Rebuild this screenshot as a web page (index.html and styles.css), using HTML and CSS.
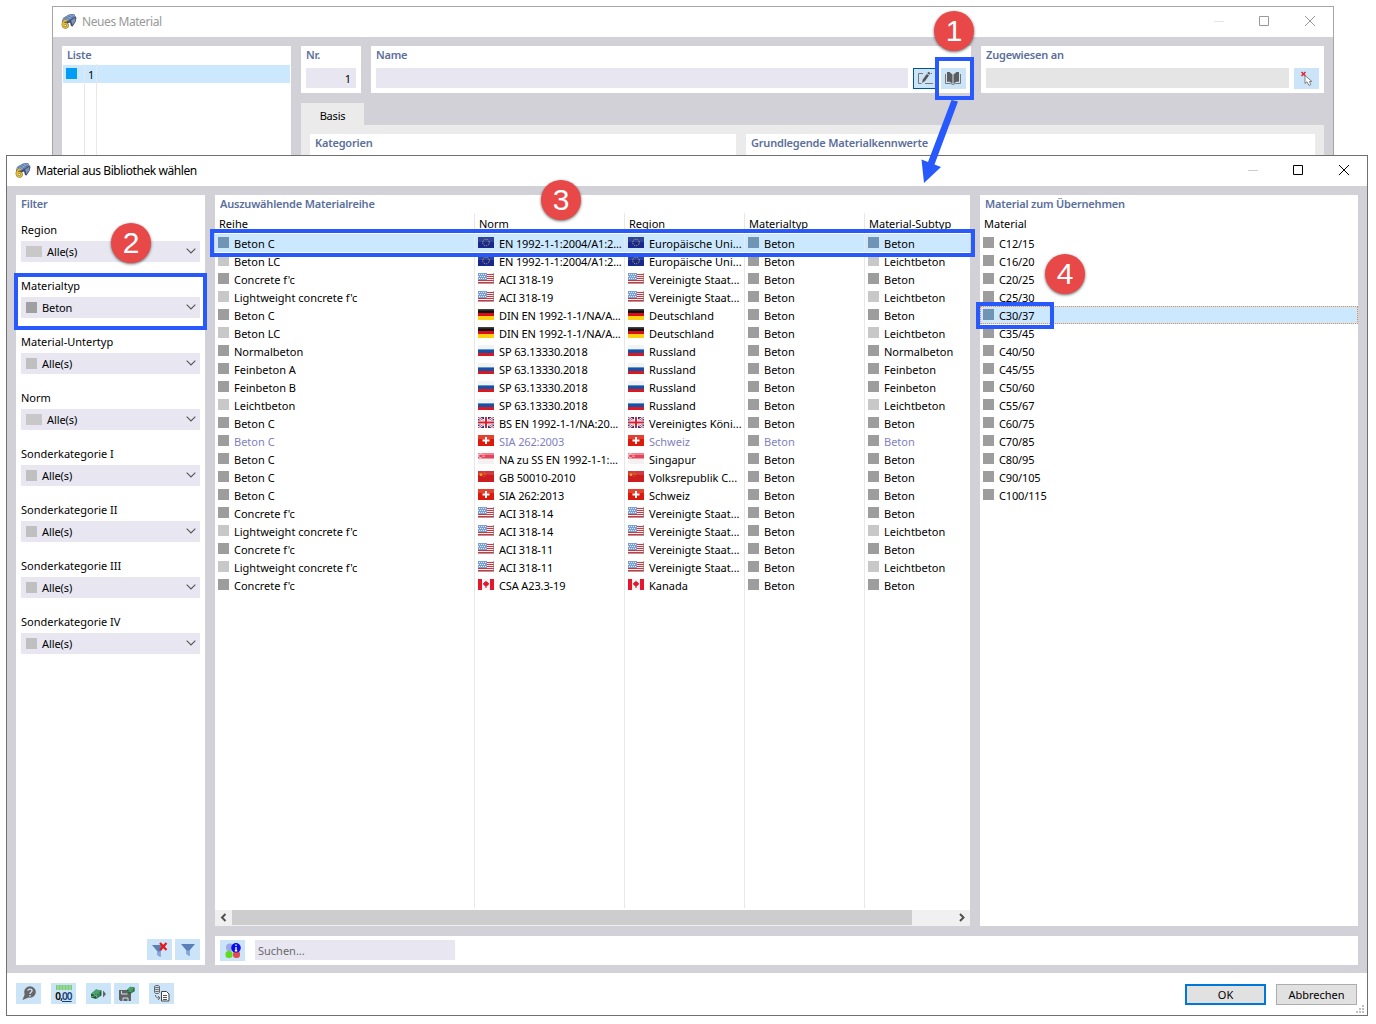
FILE: index.html
```html
<!DOCTYPE html>
<html lang="de">
<head>
    <meta charset="UTF-8">
    <meta name="viewport" content="width=device-width, initial-scale=1.0">
    <title>Material aus Bibliothek wählen</title>
    <link rel="stylesheet" href="styles.css">
</head>
<body>
    <!-- Shared icons and flags -->
    <svg class="defs" aria-hidden="true">
        <symbol id="app" viewBox="0 0 16 16">
            <path d="M2 5 8 1.5 13 1 15.500 5 14.500 9 11.500 13.500 10 13 9 9.500 5 11 1 9z" fill="#3c4f74"/>
            <path d="M2.500 5 8.500 1.500 13 1.500 14 3.500 8 7.500 4 9.500 1.500 8.500z" fill="#8fabd4"/>
            <path d="M4.500 4 9 6.500M7 2.500 11.500 5M9.500 1.500 13 4M3 6 9 3M6 8 13 3.500" stroke="#4e6c9f" stroke-width=".7" fill="none"/>
            <path d="M10 7.500 14.500 4.500 14 8.500 11.500 12z" fill="#8292b0"/>
            <path d="M5.800 7.600C3 7.200 1.600 9.600 1.800 12c.3 3.200 4.800 3.200 4.800.4 0-2.100-3-2.500-4.300-.6" stroke="#8a6a18" stroke-width="2.400" fill="none"/>
            <path d="M5.800 7.600C3 7.200 1.600 9.600 1.800 12c.3 3.200 4.800 3.200 4.800.4 0-2.100-3-2.500-4.300-.6" stroke="#e8bf3c" stroke-width="1.400" fill="none"/>
        </symbol>
        <symbol id="eu" viewBox="0 0 16 11">
            <rect width="16" height="11" fill="#18288c"/>
            <rect width="16" height="5" fill="#3c52a8" opacity=".6"/>
            <circle cx="8" cy="5.500" r="3.300" fill="none" stroke="#d0c04a" stroke-width="1" stroke-dasharray="1 1.070"/>
        </symbol>
        <symbol id="us" viewBox="0 0 16 11">
            <rect width="16" height="11" fill="#f7f2f2"/>
            <path d="M0 1.500h16M0 3.500h16M0 5.500h16M0 7.500h16M0 9.500h16" stroke="#d4343c" stroke-width="1"/>
            <rect width="9" height="7" fill="#789fd6"/>
            <path d="M1 1.500h8M0 3.500h8M1 5.500h8" stroke="#e4edf9" stroke-dasharray="1 1"/>
            <path d="M0 10.500h16M15.500 0v11" stroke="#857c80" opacity=".7"/>
        </symbol>
        <symbol id="de" viewBox="0 0 16 11">
            <rect width="16" height="4" fill="#111"/>
            <rect width="16" height="1.500" fill="#444"/>
            <rect y="4" width="16" height="3" fill="#dd0b15"/>
            <rect y="7" width="16" height="4" fill="#ffcf12"/>
        </symbol>
        <symbol id="ru" viewBox="0 0 16 11">
            <rect width="16" height="4" fill="#f1f3f5"/>
            <rect y="4" width="16" height="4" fill="#1553a8"/>
            <rect y="4" width="16" height="1" fill="#6294ca"/>
            <rect y="8" width="16" height="3" fill="#dd1720"/>
        </symbol>
        <symbol id="gb" viewBox="0 0 16 11">
            <rect width="16" height="11" fill="#26367e"/>
            <path d="M0 0 16 11M16 0 0 11" stroke="#fff" stroke-width="2.400"/>
            <path d="M0 0 16 11M16 0 0 11" stroke="#d83945" stroke-width="1"/>
            <path d="M8 0v11M0 5.500h16" stroke="#fff" stroke-width="4"/>
            <path d="M8 0v11M0 5.500h16" stroke="#d81f32" stroke-width="2"/>
        </symbol>
        <symbol id="ch" viewBox="0 0 16 11">
            <rect width="16" height="11" fill="#dc1a0c"/>
            <rect width="16" height="4" fill="#e4543f" opacity=".7"/>
            <path d="M8 2v7M4.500 5.500h7" stroke="#fff" stroke-width="2"/>
        </symbol>
        <symbol id="sg" viewBox="0 0 16 11">
            <rect width="16" height="11" fill="#f3f1f2"/>
            <rect width="16" height="5.500" fill="#e4455c"/>
            <rect width="16" height="2" fill="#ee8291"/>
            <path d="M3.500 1a2 2 0 1 0 0 3.600" stroke="#fff" fill="none" stroke-width=".9"/>
            <path d="M4.500 2h2M4.500 3.500h2" stroke="#fff" stroke-width=".8" stroke-dasharray=".8 .4"/>
        </symbol>
        <symbol id="cn" viewBox="0 0 16 11">
            <rect width="16" height="11" fill="#cc1d20"/>
            <rect width="16" height="4" fill="#d4494a" opacity=".7"/>
            <path d="m3 1.500.6 1.200 1.400.2-1 1 .2 1.400L3 4.700l-1.200.6.2-1.400-1-1 1.400-.2z" fill="#f0a41e"/>
            <path d="M5.500 1h1M6.500 2.500h1M6.500 4h1M5.500 5.300h1" stroke="#e58a25" stroke-width=".8"/>
        </symbol>
        <symbol id="ca" viewBox="0 0 16 11">
            <rect width="16" height="11" fill="#f6f3f3"/>
            <path d="M0 0h4v11H0zM12 0h4v11h-4z" fill="#e3172e"/>
            <path d="m8 1.500 1 1.500h1l-.2 1.200 1.400-.3-.4 1.600L8.500 7.500V9h-1V7.500L5.200 5.500l-.4-1.600 1.400.3L6 3h1z" fill="#e3172e"/>
        </symbol>
        <symbol id="chevron" viewBox="0 0 10 6">
            <path d="M.7.7 5 5 9.300.7" fill="none" stroke="#555" stroke-width="1.100"/>
        </symbol>
        <symbol id="funnel" viewBox="0 0 14 12">
            <path d="M0 0h14L8.500 6.500V12L5.500 10V6.500z" fill="#5b80b8"/>
            <path d="M5.500 6.500h3V12L5.500 10z" fill="#86a5df"/>
        </symbol>
        <symbol id="block" viewBox="0 0 12 10">
            <path d="M1 5 6 .5 11.500 1.500V6.500L6 10 1 8.500z" fill="#1c6238"/>
            <path d="M1 5 6 .5 11.500 1.500 7 5.500z" fill="#4aa06c"/>
            <path d="M1 8 7 6M3 4l4 4M7 5.500V10M9 3.500v4" stroke="#82c49a" stroke-width=".7" fill="none"/>
        </symbol>
    </svg>

    <!-- Window in the background -->
    <div class="window window-back">
        <div class="titlebar">
            <svg class="app-icon"><use href="#app"/></svg>
            <span class="title">Neues Material</span>
            <svg class="controls" viewBox="0 0 102 11"><path class="min" d="M0 5.500h10"/><path d="M45.500.5h9v9h-9zM91 0l10 10M101 0 91 10"/></svg>
        </div>
        <div class="back-body">
            <div class="panel list">
                <h2>Liste</h2>
                <div class="list-grid">
                    <div class="list-row"><i class="blue-box"></i><span>1</span></div>
                </div>
            </div>
            <div class="back-main">
                <div class="back-top">
                    <div class="panel nr"><h2>Nr.</h2><div class="field">1</div></div>
                    <div class="panel name">
                        <h2>Name</h2>
                        <div class="field-row">
                            <div class="field"></div>
                            <button class="icon-btn outlined"><svg width="17" height="15" viewBox="0 0 17 15"><path d="M6 2.500H1.500v10h3M14 2.500h1M8 12.500h8" fill="none" stroke="#777"/><path d="m5 12 .8-3.500 4-5.500 2.200 1.500-4 5.500z" fill="#555"/><path d="m10.300 2.200 1-1.500 2.200 1.500-1 1.500z" fill="#555"/></svg></button>
                            <button class="icon-btn book"><svg width="16" height="14" viewBox="0 0 16 14"><path d="M.5 3v9.500h5l2.500 1 2.500-1h5V3" fill="none" stroke="#777"/><path d="M2 1h2.500L7.500 3.500v9L4.500 10.800H2zM14 1h-2.500L8.500 3.500v9l3-1.700H14z" fill="#5d5d5d"/></svg></button>
                        </div>
                    </div>
                    <div class="panel assigned">
                        <h2>Zugewiesen an</h2>
                        <div class="field-row">
                            <div class="field disabled"></div>
                            <button class="icon-btn"><svg width="13" height="16" viewBox="0 0 13 16"><path d="m1.500 1 4 4M5.500 1l-4 4" stroke="#e8202b" stroke-width="1.500"/><path d="M5 4.500v8L7 10.800l2 3.700 1.800-.8L9.500 10.500h2.500z" fill="#fff" stroke="#777" stroke-width=".9"/></svg></button>
                        </div>
                    </div>
                </div>
                <div class="tab">Basis</div>
                <div class="tab-page">
                    <div class="panel category"><h2>Kategorien</h2></div>
                    <div class="panel values"><h2>Grundlegende Materialkennwerte</h2></div>
                </div>
            </div>
        </div>
    </div>

    <!-- Library dialog -->
    <div class="window window-front">
        <div class="titlebar">
            <svg class="app-icon"><use href="#app"/></svg>
            <span class="title">Material aus Bibliothek wählen</span>
            <svg class="controls" viewBox="0 0 102 11"><path class="min" d="M0 5.500h10"/><path d="M45.500.5h9v9h-9zM91 0l10 10M101 0 91 10"/></svg>
        </div>
        <div class="front-body">
            <div class="panel filter">
                <h2>Filter</h2>
                <div id="filters"></div>
                <div class="filter-buttons">
                    <button class="icon-btn"><svg width="16" height="15" viewBox="0 0 16 15"><use href="#funnel" x="0" y="3" width="14" height="12"/><path d="m8 1 6.500 7M14.500 1 8 8" stroke="#ec1515" stroke-width="2.200"/></svg></button>
                    <button class="icon-btn"><svg width="14" height="12"><use href="#funnel"/></svg></button>
                </div>
            </div>
            <div class="content">
                <div class="tables">
                    <div class="panel series">
                        <h2>Auszuwählende Materialreihe</h2>
                        <div class="grid">
                            <div class="grid-row head"><span>Reihe</span><span>Norm</span><span>Region</span><span>Materialtyp</span><span>Material-Subtyp</span></div>
                            <div id="series"></div>
                            <div class="grid-row rest"><span></span><span></span><span></span><span></span><span></span></div>
                        </div>
                        <div class="scrollbar">
                            <svg width="17" height="15"><path d="M10.500 4 7 7.500l3.500 3.500"/></svg>
                            <div class="thumb"></div>
                            <svg width="17" height="15"><path d="M7 4l3.500 3.500L7 11"/></svg>
                        </div>
                    </div>
                    <div class="panel materials">
                        <h2>Material zum Übernehmen</h2>
                        <div class="materials-head">Material</div>
                        <div id="materials"></div>
                    </div>
                </div>
                <div class="panel search">
                    <button class="icon-btn"><svg width="16" height="16" viewBox="0 0 16 16"><circle cx="5" cy="4.500" r="4" fill="#9aa9e8"/><rect x=".5" y="8" width="7" height="7" rx="3" fill="#5edc1e"/><rect x="8" y="8" width="7" height="7" rx="3" fill="#e44a50"/><circle cx="11" cy="4.800" r="4.800" fill="#0909ee"/><path d="M11 1.500v1.500M11 4v4M9.800 7.800h2.500" stroke="#fff" stroke-width="1.400"/></svg></button>
                    <div class="search-input">Suchen...</div>
                </div>
            </div>
        </div>
        <div class="footer">
            <button class="icon-btn"><svg width="16" height="15" viewBox="0 0 16 15"><circle cx="9" cy="6" r="5.800" fill="#666"/><path d="M4 7.500 1.500 14l6-2.500z" fill="#666"/><path d="M7 4.800C7 2.500 11 2.600 11 4.800 11 6.300 9 6.200 9 8M9 9v1.500" stroke="#cce4f7" stroke-width="1.400" fill="none"/></svg></button>
            <button class="icon-btn units"><i></i><span>0,<u>00</u></span></button>
            <button class="icon-btn"><svg width="17" height="12" viewBox="0 0 17 12"><use href="#block" x="0" y="1" width="12" height="10"/><path d="m13 2.500 3 3.500-3 3.500z" fill="#666"/></svg></button>
            <button class="icon-btn close"><svg width="17" height="16" viewBox="0 0 17 16"><path d="M1 4h9v3h3v8H2.500L1 13.500z" fill="#626262"/><path d="M3.500 5v3h6M5 15v-3h5v3" stroke="#cce4f7" fill="none"/><use href="#block" x="8" y="0" width="9" height="8"/></svg></button>
            <button class="icon-btn"><svg width="17" height="17" viewBox="0 0 17 17"><path d="M1.500 1.500c0-1.400 5-1.400 5 0s-5 1.400-5 0v6c0 1.400 5 1.400 5 0v-6M1.500 3.500c0 1.400 5 1.400 5 0M1.500 5.500c0 1.400 5 1.400 5 0M2.500 10c0 2 1 3 4 3M5 11l2 2-2 2" fill="none" stroke="#686868"/><path d="M8.500 6.500h5l2.500 2.500v7h-7.500z" fill="#fff" stroke="#444"/><path d="M10 10.500h4M10 12.500h4M10 14.500h4" stroke="#555"/></svg></button>
            <button class="push default">OK</button>
            <button class="push">Abbrechen</button>
            <svg class="grip" width="8" height="8"><path d="M6 0h2v2H6zM3 3h2v2H3zM6 3h2v2H6zM0 6h2v2H0zM3 6h2v2H3zM6 6h2v2H6z"/></svg>
        </div>
    </div>

    <!-- Step markers -->
    <div class="frame frame-book"></div>
    <div class="frame frame-type"></div>
    <div class="frame frame-series"></div>
    <div class="frame frame-material"></div>
    <svg class="arrow" width="40" height="84" viewBox="0 0 40 84"><path d="M38 1.500 14.500 64.500 21 67 4 83 1.500 59.500 8 62 31.500 0z"/></svg>
    <div class="step step-1">1</div>
    <div class="step step-2">2</div>
    <div class="step step-3">3</div>
    <div class="step step-4">4</div>

    <script>
        const filters = [
            ['Region', 'Alle(s)', 'wide'],
            ['Materialtyp', 'Beton', 'dark'],
            ['Material-Untertyp', 'Alle(s)', ''],
            ['Norm', 'Alle(s)', 'wide'],
            ['Sonderkategorie I', 'Alle(s)', ''],
            ['Sonderkategorie II', 'Alle(s)', ''],
            ['Sonderkategorie III', 'Alle(s)', ''],
            ['Sonderkategorie IV', 'Alle(s)', '']
        ];

        // name, flag, standard, region, subtype
        const series = [
            ['Beton C', 'eu', 'EN 1992-1-1:2004/A1:2...', 'Europäische Uni...', 'Beton'],
            ['Beton LC', 'eu', 'EN 1992-1-1:2004/A1:2...', 'Europäische Uni...', 'Leichtbeton'],
            ["Concrete f'c", 'us', 'ACI 318-19', 'Vereinigte Staat...', 'Beton'],
            ["Lightweight concrete f'c", 'us', 'ACI 318-19', 'Vereinigte Staat...', 'Leichtbeton'],
            ['Beton C', 'de', 'DIN EN 1992-1-1/NA/A...', 'Deutschland', 'Beton'],
            ['Beton LC', 'de', 'DIN EN 1992-1-1/NA/A...', 'Deutschland', 'Leichtbeton'],
            ['Normalbeton', 'ru', 'SP 63.13330.2018', 'Russland', 'Normalbeton'],
            ['Feinbeton A', 'ru', 'SP 63.13330.2018', 'Russland', 'Feinbeton'],
            ['Feinbeton B', 'ru', 'SP 63.13330.2018', 'Russland', 'Feinbeton'],
            ['Leichtbeton', 'ru', 'SP 63.13330.2018', 'Russland', 'Leichtbeton'],
            ['Beton C', 'gb', 'BS EN 1992-1-1/NA:20...', 'Vereinigtes Köni...', 'Beton'],
            ['Beton C', 'ch', 'SIA 262:2003', 'Schweiz', 'Beton'],
            ['Beton C', 'sg', 'NA zu SS EN 1992-1-1:...', 'Singapur', 'Beton'],
            ['Beton C', 'cn', 'GB 50010-2010', 'Volksrepublik C...', 'Beton'],
            ['Beton C', 'ch', 'SIA 262:2013', 'Schweiz', 'Beton'],
            ["Concrete f'c", 'us', 'ACI 318-14', 'Vereinigte Staat...', 'Beton'],
            ["Lightweight concrete f'c", 'us', 'ACI 318-14', 'Vereinigte Staat...', 'Leichtbeton'],
            ["Concrete f'c", 'us', 'ACI 318-11', 'Vereinigte Staat...', 'Beton'],
            ["Lightweight concrete f'c", 'us', 'ACI 318-11', 'Vereinigte Staat...', 'Leichtbeton'],
            ["Concrete f'c", 'ca', 'CSA A23.3-19', 'Kanada', 'Beton']
        ];

        const materials = ['C12/15', 'C16/20', 'C20/25', 'C25/30', 'C30/37', 'C35/45', 'C40/50', 'C45/55',
            'C50/60', 'C55/67', 'C60/75', 'C70/85', 'C80/95', 'C90/105', 'C100/115'];

        const swatch = light => `<i class="swatch${light ? ' light' : ''}"></i>`;
        const flag = id => `<svg class="flag"><use href="#${id}"/></svg>`;

        document.getElementById('filters').innerHTML = filters.map(([label, value, kind]) => `
            <label>${label}</label>
            <div class="combo"><i class="box ${kind}"></i><span>${value}</span><svg class="chevron"><use href="#chevron"/></svg></div>`).join('');

        document.getElementById('series').innerHTML = series.map(([name, f, norm, region, sub], i) => {
            const light = sub === 'Leichtbeton';
            const state = i === 0 ? ' selected' : i === 11 ? ' outdated' : '';
            return `<div class="grid-row${state}">
                <span>${swatch(light)}<b>${name}</b></span>
                <span>${flag(f)}<b class="norm">${norm}</b></span>
                <span>${flag(f)}<b>${region}</b></span>
                <span>${swatch(false)}<b>Beton</b></span>
                <span>${swatch(light)}<b>${sub}</b></span>
            </div>`;
        }).join('');

        document.getElementById('materials').innerHTML = materials.map(m =>
            `<div class="material-row${m === 'C30/37' ? ' selected' : ''}">${swatch(false)}<b>${m}</b></div>`).join('');
    </script>
</body>
</html>
```
FILE: styles.css
```css
* {
    box-sizing: border-box;
}

body {
    margin: 0;
    width: 1376px;
    height: 1024px;
    position: relative;
    overflow: hidden;
    background: #fff;
    font-family: "Noto Sans", "Open Sans", sans-serif;
    font-size: 11px;
    color: #000;
}

.defs {
    position: absolute;
    width: 0;
    height: 0;
}

svg {
    display: block;
    flex: none;
}

b {
    font-weight: normal;
    white-space: nowrap;
}

h2 {
    margin: 0;
    padding-left: 5px;
    height: 18px;
    line-height: 18px;
    font-size: 11px;
    font-weight: 600;
    letter-spacing: -0.2px;
    color: #5b6f9b;
    white-space: nowrap;
}

/* Windows */
.window {
    position: absolute;
    display: flex;
    flex-direction: column;
    background: #fff;
    border: 1px solid #707070;
}

.window-back {
    left: 52px;
    top: 6px;
    width: 1282px;
    height: 160px;
    border-color: #a6a6a6;
}

.window-front {
    left: 6px;
    top: 155px;
    width: 1362px;
    height: 861px;
}

.titlebar {
    display: flex;
    align-items: center;
    flex: none;
    height: 30px;
    padding: 0 17px 0 8px;
    font-size: 12px;
    letter-spacing: -0.42px;
}

.title {
    flex: 1;
    margin: 0 0 2px 5px;
}

.app-icon {
    width: 16px;
    height: 16px;
    margin-bottom: 2px;
}

.controls {
    width: 102px;
    height: 11px;
    margin-bottom: 1px;
    fill: none;
    stroke: #000;
    stroke-width: 1;
}

.controls .min {
    stroke: #ccc;
}

.window-back .title {
    color: #999;
}

.window-back .controls {
    stroke: #999;
}

.window-back .controls .min {
    stroke: #e4e4e4;
}

.panel {
    background: #fff;
}

.field {
    height: 20px;
    margin: 4px 5px 0;
    padding-right: 5px;
    background: #e7e6f1;
    line-height: 22px;
    text-align: right;
}

.icon-btn {
    display: flex;
    align-items: center;
    justify-content: center;
    flex: none;
    width: 25px;
    height: 21px;
    padding: 0;
    border: none;
    background: #cce4f7;
}

.icon-btn.outlined {
    border: 1px solid #00549a;
}

.icon-btn.book {
    margin-left: 3px;
    padding: 0 2px 2px 0;
}

/* Background window */
.back-body {
    display: flex;
    flex: 1;
    gap: 10px;
    padding: 9px 9px 0;
    background: #d2d1d7;
}

.list {
    width: 229px;
}

.list-grid {
    height: 94px;
    margin: 0 1px;
    padding-top: 1px;
    background: linear-gradient(#e8e8e8, #e8e8e8) 21px 0 / 1px 100% no-repeat, linear-gradient(#e8e8e8, #e8e8e8) 33px 0 / 1px 100% no-repeat;
}

.list-row {
    display: flex;
    align-items: center;
    height: 18px;
    padding: 0 0 1px 3px;
    background: linear-gradient(#e8e8e8, #e8e8e8) 21px 0 / 1px 100% no-repeat, linear-gradient(#e8e8e8, #e8e8e8) 33px 0 / 1px 100% no-repeat, #cce8ff;
}

.list-row span {
    margin: 2px 0 0 11px;
}

.blue-box {
    width: 11px;
    height: 11px;
    background: #009cf5;
}

.back-main {
    flex: 1;
}

.back-top {
    display: flex;
    gap: 10px;
    height: 47px;
    margin-bottom: 10px;
}

.nr {
    width: 60px;
}

.name {
    width: 600px;
}

.assigned {
    flex: 1;
}

.field-row {
    display: flex;
    margin: 4px 5px 0;
}

.field-row .field {
    flex: 1;
    margin: 0 5px 0 0;
}

.field.disabled {
    background: #e5e5e5;
}

.tab {
    width: 63px;
    height: 22px;
    background: #ebebeb;
    line-height: 26px;
    letter-spacing: -0.2px;
    text-align: center;
}

.tab-page {
    display: flex;
    gap: 10px;
    height: 40px;
    padding: 9px 9px 0;
    background: #ebebeb;
}

.category {
    width: 426px;
}

.values {
    flex: 1;
}

/* Library dialog */
.front-body {
    display: flex;
    flex: none;
    gap: 10px;
    height: 787px;
    padding: 9px 9px 8px;
    background: #d2d1d7;
}

.filter {
    display: flex;
    flex-direction: column;
    width: 189px;
    padding: 0 5px 5px;
}

.filter h2 {
    padding-left: 0;
}

#filters {
    flex: 1;
    padding-top: 7px;
}

#filters label {
    display: block;
    height: 21px;
    line-height: 20px;
}

.combo {
    display: flex;
    align-items: center;
    height: 21px;
    margin-bottom: 14px;
    padding: 0 4px 0 5px;
    background: #e7e6f1;
}

.combo span {
    flex: 1;
    margin: 0 0 0 5px;
    letter-spacing: -0.1px;
}

.combo .box {
    width: 11px;
    height: 11px;
    background: #c0c0c0;
}

.combo .wide {
    width: 16px;
    background: #c8c8c8;
}

.combo .dark {
    background: #a0a0a0;
}

.chevron {
    width: 10px;
    height: 6px;
    margin-bottom: 1px;
}

.filter-buttons {
    display: flex;
    justify-content: flex-end;
    gap: 3px;
}

.content {
    display: flex;
    flex: 1;
    flex-direction: column;
    gap: 10px;
}

.tables {
    display: flex;
    flex: 1;
    gap: 10px;
}

.series {
    display: flex;
    flex-direction: column;
    width: 755px;
}

.grid {
    display: flex;
    flex: 1;
    flex-direction: column;
}

.grid-row {
    display: grid;
    grid-template-columns: 260px 150px 120px 120px 105px;
    height: 18px;
}

.grid-row span {
    display: flex;
    padding-left: 3px;
    border-right: 1px solid #e8e8e8;
    overflow: hidden;
}

.grid-row span:last-child {
    border-right-color: transparent;
}

.grid-row.head {
    height: 21px;
}

.head span {
    padding-left: 4px;
    line-height: 22px;
}

.grid-row.rest {
    flex: 1;
}

.grid-row b,
.material-row b {
    margin-left: 5px;
    line-height: 20px;
}

.grid-row .norm {
    letter-spacing: -0.13px;
}

.material-row b {
    letter-spacing: -0.15px;
}

.swatch {
    flex: none;
    width: 11px;
    height: 11px;
    margin-top: 3px;
    background: #9d9d9d;
}

.swatch.light {
    background: #c8c8c8;
}

.flag {
    width: 16px;
    height: 11px;
    margin-top: 3px;
}

.selected {
    background: #cce8ff;
}

.selected .swatch {
    background: #7094b4;
}

.outdated {
    color: #7f7fbf;
}

.scrollbar {
    display: flex;
    height: 16px;
    margin-top: 2px;
    background: #f0f0f0;
}

.scrollbar svg {
    fill: none;
    stroke: #505050;
    stroke-width: 2;
}

.scrollbar .thumb {
    width: 680px;
    height: 15px;
    margin-right: 41px;
    background: #cdcdcd;
}

.materials {
    flex: 1;
}

.materials-head {
    height: 21px;
    padding-left: 4px;
    line-height: 22px;
}

.material-row {
    display: flex;
    height: 18px;
    padding-left: 3px;
}

.material-row.selected {
    outline: 1px dotted #e88a3c;
    outline-offset: -1px;
}

.search {
    display: flex;
    height: 29px;
    padding: 4px 5px;
}

.search-input {
    width: 200px;
    height: 20px;
    margin-left: 10px;
    padding-left: 3px;
    background: #e7e6f1;
    color: #6b6b6b;
    line-height: 21px;
}

.footer {
    display: flex;
    flex: 1;
    align-items: flex-start;
    gap: 10px;
    padding: 10px 3px 0 9px;
}

.icon-btn.close {
    margin-left: -7px;
}

.units {
    flex-direction: column;
}

.units i {
    width: 16px;
    height: 5px;
    background: repeating-linear-gradient(90deg, #7cc87c 0 1px, #93d893 1px 3px);
}

.units span {
    font: 600 10px/12px "Noto Sans", sans-serif;
    letter-spacing: -0.9px;
}

.units u {
    color: #17417c;
}

.push {
    width: 81px;
    height: 21px;
    margin-top: 1px;
    padding: 0;
    border: 1px solid #adadad;
    background: #e1e1e1;
    font: 11px "Noto Sans", sans-serif;
}

.push.default {
    margin-left: auto;
    border: 2px solid #0078d7;
}

.grip {
    align-self: flex-end;
    margin: 0 0 2px -11px;
    fill: #bfbfbf;
}

/* Step markers */
.frame {
    position: absolute;
    border: 4px solid #2859fd;
}

.frame-book {
    left: 935px;
    top: 57px;
    width: 39px;
    height: 43px;
}

.frame-type {
    left: 14px;
    top: 273px;
    width: 193px;
    height: 57px;
}

.frame-series {
    left: 210px;
    top: 229px;
    width: 765px;
    height: 28px;
}

.frame-material {
    left: 976px;
    top: 302px;
    width: 78px;
    height: 27px;
}

.arrow {
    position: absolute;
    left: 920px;
    top: 100px;
    fill: #2859fd;
}

.step {
    position: absolute;
    width: 40px;
    height: 40px;
    border-radius: 50%;
    background: #e94848;
    box-shadow: 0 1px 3px rgba(0, 0, 0, 0.6);
    color: #fff;
    font: 30px/40px "Liberation Sans", Arial, sans-serif;
    text-align: center;
}

.step-1 {
    left: 934px;
    top: 11px;
}

.step-2 {
    left: 111px;
    top: 223px;
}

.step-3 {
    left: 541px;
    top: 180px;
}

.step-4 {
    left: 1045px;
    top: 254px;
}
```
